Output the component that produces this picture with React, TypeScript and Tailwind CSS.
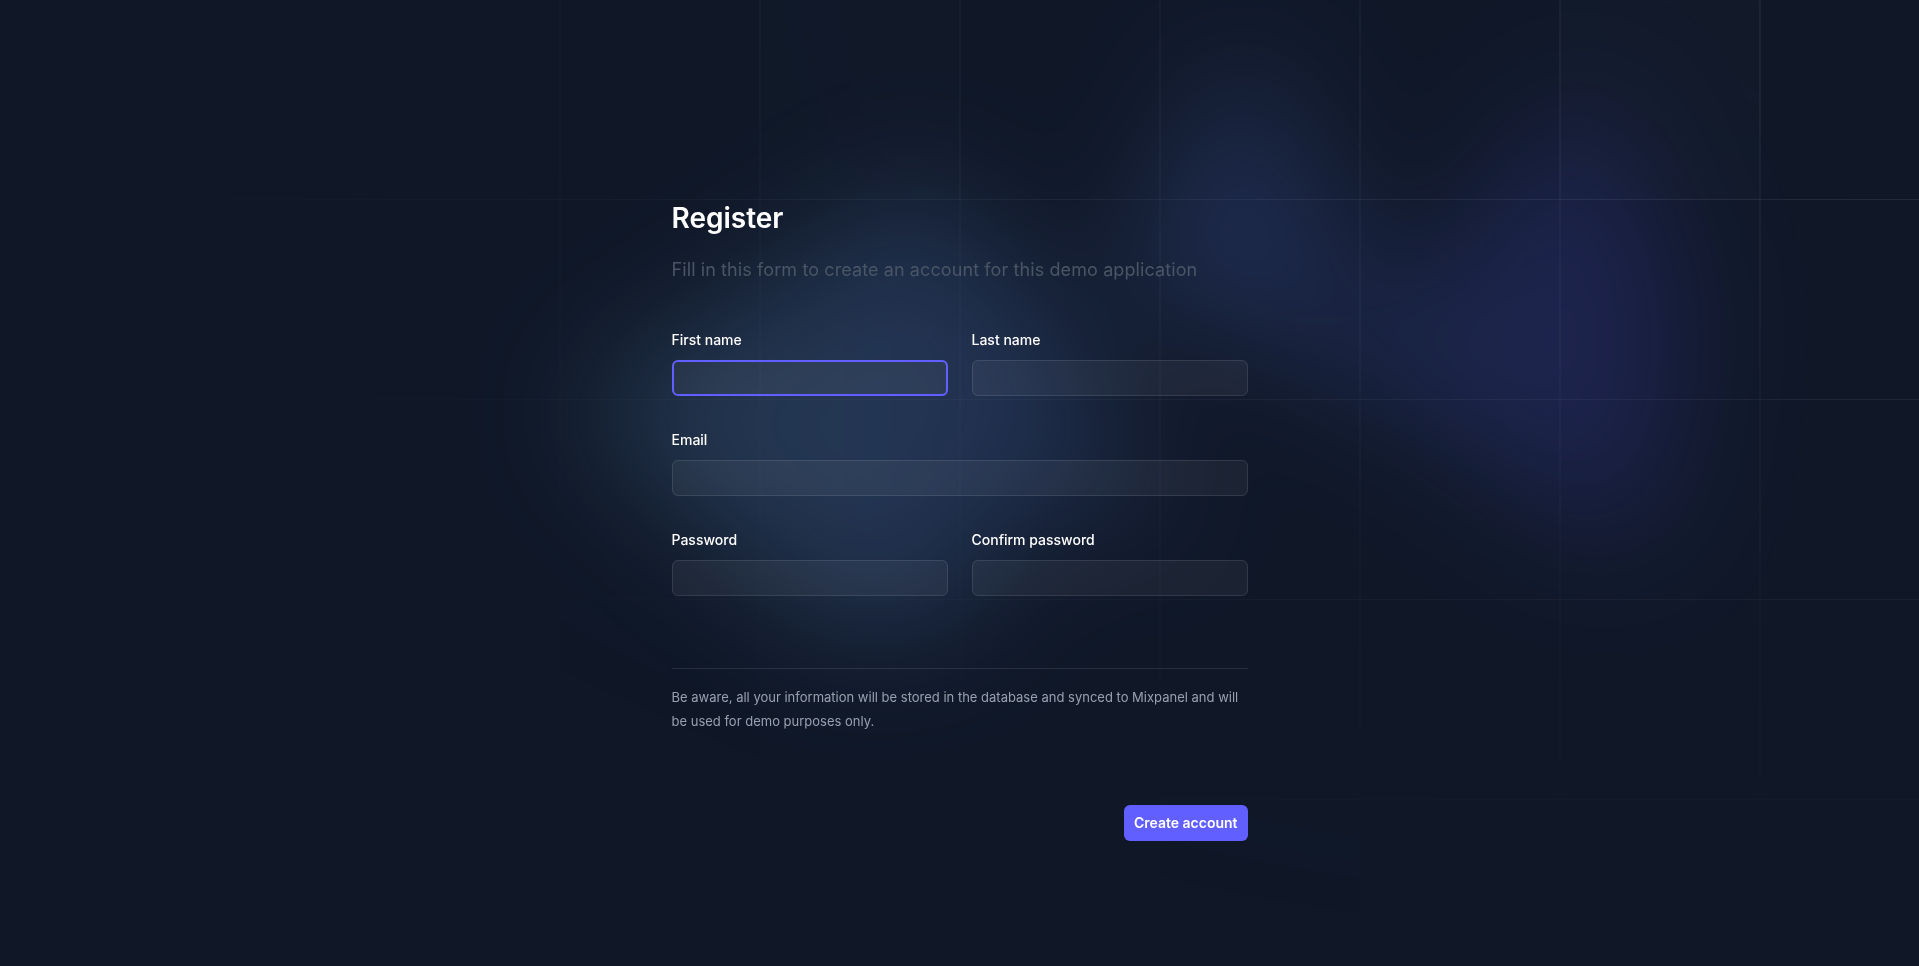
export default function App() {
  return (
    <div className="relative isolate min-h-screen overflow-hidden bg-gray-900 font-['Inter',sans-serif]">
      <svg
        aria-hidden="true"
        className="absolute inset-0 -z-10 h-full w-full stroke-white/10 [mask-image:radial-gradient(100%_100%_at_top_right,white,transparent)]"
      >
        <defs>
          <pattern id="grid-pattern" width="200" height="200" x="50%" y="-1" patternUnits="userSpaceOnUse">
            <path d="M.5 200V.5H200" fill="none" />
          </pattern>
        </defs>
        <svg x="50%" y="-1" className="overflow-visible fill-gray-800/20">
          <path d="M-200 0h201v201h-201Z M600 0h201v201h-201Z M-400 600h201v201h-201Z M200 800h201v201h-201Z" strokeWidth="0" />
        </svg>
        <rect width="100%" height="100%" strokeWidth="0" fill="url(#grid-pattern)" />
      </svg>
      <div aria-hidden="true" className="absolute left-[calc(50%-24rem)] top-[calc(50%-30rem)] -z-10 transform-gpu blur-3xl">
        <div className="aspect-[1108/632] w-[69.25rem] bg-linear-to-r from-[#80caff] to-[#4f46e5] opacity-20 [clip-path:polygon(73.6%_51.7%,91.7%_11.8%,100%_46.4%,97.4%_82.2%,92.5%_84.9%,75.7%_64%,55.3%_47.5%,46.5%_49.4%,45%_62.9%,50.3%_73.6%,55.3%_81.8%,38.8%_78.3%,36%_96.2%,23.7%_100%,0%_64.1%,31.6%_28%,46%_55.9%,60.2%_4.8%,73.6%_51.7%)]" />
      </div>

      <main className="mx-auto w-full max-w-xl pt-[200px] pb-24">
        <form>
          <div className="border-b border-white/10 pb-18">
            <h2 className="text-[28px] leading-9 font-semibold text-white">Register</h2>
            <p className="mt-5 text-lg leading-7 tracking-[0.1px] text-gray-600">
              Fill in this form to create an account for this demo application
            </p>

            <div className="mt-11 grid grid-cols-2 gap-x-6 gap-y-8">
              <div>
                <label htmlFor="first-name" className="block text-sm/6 font-medium text-white">
                  First name
                </label>
                <div className="mt-2">
                  <input
                    id="first-name"
                    type="text"
                    className="block h-9 w-full rounded-md bg-white/5 px-3 py-1.5 text-sm/6 text-white outline-2 -outline-offset-2 outline-indigo-500"
                  />
                </div>
              </div>
              <div>
                <label htmlFor="last-name" className="block text-sm/6 font-medium text-white">
                  Last name
                </label>
                <div className="mt-2">
                  <input
                    id="last-name"
                    type="text"
                    className="block h-9 w-full rounded-md bg-white/5 px-3 py-1.5 text-sm/6 text-white outline-1 -outline-offset-1 outline-white/10"
                  />
                </div>
              </div>
              <div className="col-span-2">
                <label htmlFor="email" className="block text-sm/6 font-medium text-white">
                  Email
                </label>
                <div className="mt-2">
                  <input
                    id="email"
                    type="email"
                    className="block h-9 w-full rounded-md bg-white/5 px-3 py-1.5 text-sm/6 text-white outline-1 -outline-offset-1 outline-white/10"
                  />
                </div>
              </div>
              <div>
                <label htmlFor="password" className="block text-sm/6 font-medium text-white">
                  Password
                </label>
                <div className="mt-2">
                  <input
                    id="password"
                    type="password"
                    className="block h-9 w-full rounded-md bg-white/5 px-3 py-1.5 text-sm/6 text-white outline-1 -outline-offset-1 outline-white/10"
                  />
                </div>
              </div>
              <div>
                <label htmlFor="confirm-password" className="block text-sm/6 font-medium text-white">
                  Confirm password
                </label>
                <div className="mt-2">
                  <input
                    id="confirm-password"
                    type="password"
                    className="block h-9 w-full rounded-md bg-white/5 px-3 py-1.5 text-sm/6 text-white outline-1 -outline-offset-1 outline-white/10"
                  />
                </div>
              </div>
            </div>
          </div>

          <p className="pt-4 text-[13px] leading-6 text-gray-400">
            Be aware, all your information will be stored in the database and synced to Mixpanel and will be used for
            demo purposes only.
          </p>

          <div className="mt-[72px] flex items-center justify-end">
            <button
              type="button"
              className="h-9 rounded-md bg-indigo-500 px-[10px] text-sm font-semibold text-white shadow-xs"
            >
              Create account
            </button>
          </div>
        </form>
      </main>
    </div>
  );
}
